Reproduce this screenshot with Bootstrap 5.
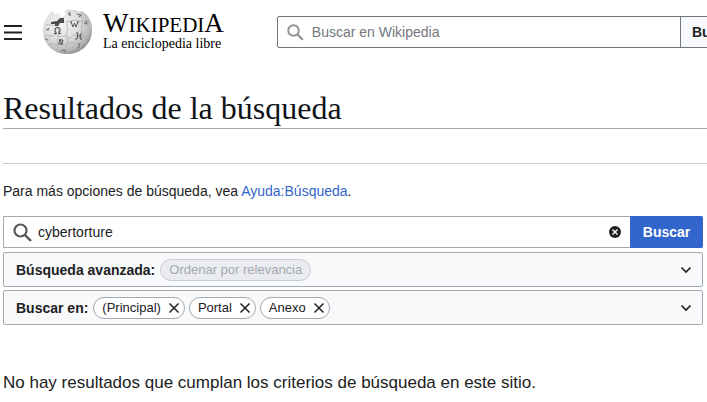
<!DOCTYPE html>
<html lang="es">
<head>
<meta charset="utf-8">
<meta name="viewport" content="width=device-width, initial-scale=1">
<title>Resultados de la búsqueda - Wikipedia, la enciclopedia libre</title>
<link href="https://cdn.jsdelivr.net/npm/bootstrap@5.3.0/dist/css/bootstrap.min.css" rel="stylesheet">
<style>
body { font-family: "Liberation Sans", Arial, sans-serif; font-size: 14px; line-height: 22px; color: #202122; overflow-x: hidden; }
a { color: #36c; }
svg { display: block; flex: none; }
.site-header { height: 64px; overflow: hidden; padding-left: 3px; }
.menu-btn { padding: 0 1px; margin-right: 19px; }
.brand { color: #000; font-family: "Liberation Serif", "Times New Roman", serif; margin-right: 53px; gap: 11px; }
.wordmark { font-size: 21px; line-height: 22px; }
.wordmark span { font-size: 27px; }
.tagline { font-size: 14px; line-height: 16px; }
.box { border: 1px solid #a2a9b1; border-radius: 2px; }
.top-search { height: 32px; border: 1px solid #72777d; border-radius: 2px; margin-right: -48px; }
.field { border: 0; outline: 0; background: none; color: #202122; padding: 0; min-width: 0; }
.top-search .field { padding-left: 8px; }
.top-search .field::placeholder { color: #72777d; opacity: 1; }
.top-search svg { margin-left: 9px; }
.top-search button { background: #f8f9fa; border: 0; border-left: 1px solid #72777d; color: #202122; padding: 0 11px; width: 74px; text-align: left; flex: none; }
main { padding: 0 4px 0 3px; }
h1 { font-family: "Liberation Serif", Georgia, serif; font-size: 32px; line-height: 40px; font-weight: 400; color: #101418; border-bottom: 1px solid #a2a9b1; margin: 24px -4px 0 0; }
.divider { border-top: 1px solid #c8ccd1; margin: 34px -4px 16px 0; }
.query { height: 32px; border-right: 0; margin-top: 14px; }
.query .field { padding-left: 6px; }
.query > svg { margin-left: 9px; }
.clear-btn { padding: 0; margin-right: 9px; }
.submit-btn { align-self: stretch; margin: -1px 0; background: #36c; color: #fff; border: 0; border-radius: 0 2px 2px 0; width: 73px; }
.panel { min-height: 35px; background: #f8f9fa; padding: 0 10px 0 12px; gap: 5px; }
.panels { margin-top: 4px; gap: 3px; }
.pill { height: 22px; border: 1px solid #a2a9b1; border-radius: 11px; background: #fff; font-size: 13px; line-height: 20px; padding: 0 4px 0 8px; gap: 7px; }
.pill.muted { background: #eaecf0; border-color: #c8ccd1; color: #a2a9b1; padding-right: 8px; }
.plain { border: 0; background: none; padding: 0; color: #202122; }
.empty { font-size: 17px; line-height: 24px; margin: 46px 0 0; }
</style>
</head>
<body>
<header class="site-header d-flex align-items-center">
  <button class="menu-btn border-0 bg-transparent" type="button" aria-label="Menú principal">
    <svg width="18" height="16" viewBox="0 0 18 16"><path d="M0 2h18M0 8.500h18M0 15h18" stroke="#202122" stroke-width="2"/></svg>
  </button>
  <a class="brand d-flex align-items-center text-decoration-none" href="#">
    <svg width="50" height="46" viewBox="0 0 50 46" aria-hidden="true">
      <defs>
        <radialGradient id="globe" cx=".38" cy=".32" r=".72"><stop offset="0" stop-color="#f5f5f5"/><stop offset=".5" stop-color="#dedede"/><stop offset=".82" stop-color="#b8b8b8"/><stop offset="1" stop-color="#808080"/></radialGradient>
        <clipPath id="ball"><path d="M12 1c-1 3 0 5 2 4 2-3 5 0 3 3l5-1 2-2-2-3 4-2 5 1 4 0 1 2 4-1 4 3C48 9 50 15 50 21 50 35 39 45 25 45S1 35 1 21C1 12 6 5 12 1Z"/></clipPath>
      </defs>
      <g clip-path="url(#ball)">
        <path d="M0 0h50v46H0z" fill="url(#globe)"/>
        <path d="M4 16c4-1 5 1 9 0M16 15c-1 5 2 8 0 13s1 8 0 15M2 27c4-2 6 1 9 0s2-4 5-1 6 0 8 1 2 4 5 1 5-2 8 0 4-3 12-1M5 36c4-2 7 0 11-1s5 2 9 0 6-2 9 0 6-1 11 0M25 12c-1 5 2 6 0 11s2 7 0 12 1 6 0 10M40 4c-2 5 2 7 0 12s2 9 0 14-1 6-2 11M25 12c5 1 7-2 12 0s7-1 12 1" fill="none" stroke="#b0b0b0" stroke-width=".8"/>
        <path d="M9 13l6-1 3-3 4 0 0 3-4 2-2 3h-3v-2l-4 0Z" fill="#4c4c4c"/>
        <path d="M17 10h5v4h-5z" fill="#4c4c4c"/>
        <path d="M26 4l3 2M28 3l-1 4M35 5l4 1-2 2M44 11l1 4-3-1M4 20l2 1 1-2M3 30l3 1M36 35c3-1 1 3 0 4M19 42l3-1 2 2" fill="none" stroke="#777" stroke-width="1.100"/>
        <path d="M12 24.500h2v-1c-2-2-1-5 1.500-5s3.500 3 1.500 5v1h2" fill="none" stroke="#444" stroke-width="1.100"/>
        <path d="M28 13h2M29 13l2 5 1.500-4 1.500 4 2-5M35 13h2M34 24h2l-1 6h-2M39 24l-1 6h2M35 28l3-2M17 31l4 0-1 4-3 0 1-5 2 6" fill="none" stroke="#555" stroke-width="1"/>
      </g>
    </svg>
    <div class="text-nowrap">
      <div class="wordmark"><span>W</span>IKIPEDI<span>A</span></div>
      <div class="tagline">La enciclopedia libre</div>
    </div>
  </a>
  <form class="top-search d-flex align-items-center flex-grow-1" role="search">
    <svg width="17" height="17" viewBox="0 0 17 17"><circle cx="6.500" cy="6.500" r="5.300" fill="none" stroke="#909396" stroke-width="1.900"/><path d="m10.500 10.500 5.300 5.300" stroke="#909396" stroke-width="2.200"/></svg>
    <input class="field flex-grow-1" type="search" placeholder="Buscar en Wikipedia" aria-label="Buscar en Wikipedia">
    <button class="fw-bold align-self-stretch" type="submit">Buscar</button>
  </form>
</header>
<main>
  <h1>Resultados de la búsqueda</h1>
  <div class="divider"></div>
  <p class="mb-0">Para más opciones de búsqueda, vea <a class="text-decoration-none" href="#">Ayuda:Búsqueda</a>.</p>
  <form>
    <div class="query box d-flex align-items-center">
      <svg width="19" height="19" viewBox="0 0 19 19"><circle cx="7.500" cy="7.500" r="6" fill="none" stroke="#54595d" stroke-width="2.200"/><path d="m12 12 6 6" stroke="#54595d" stroke-width="2.400"/></svg>
      <input class="field flex-grow-1" type="text" value="cybertorture" aria-label="Buscar">
      <button class="clear-btn border-0 bg-transparent" type="button" aria-label="Borrar"><svg width="12" height="12" viewBox="0 0 12 12"><circle cx="6" cy="6" r="6" fill="#202122"/><path d="m3.500 3.500 5 5m0-5-5 5" stroke="#fff" stroke-width="1.400"/></svg></button>
      <button class="submit-btn fw-bold" type="submit">Buscar</button>
    </div>
    <div class="panels d-flex flex-column">
      <div class="panel box d-flex align-items-center">
        <span class="fw-bold">Búsqueda avanzada:</span>
        <span class="pill muted">Ordenar por relevancia</span>
        <button class="plain ms-auto" type="button" aria-label="Mostrar búsqueda avanzada"><svg width="12" height="12" viewBox="0 0 12 12"><path d="m1.500 3.500 4.500 4.500 4.500-4.500" fill="none" stroke="#202122" stroke-width="1.700"/></svg></button>
      </div>
      <div class="panel box d-flex align-items-center">
        <span class="fw-bold">Buscar en:</span>
        <div class="d-flex gap-1">
          <span class="pill d-flex align-items-center">(Principal)<button class="plain" type="button" aria-label="Quitar (Principal)"><svg width="12" height="12" viewBox="0 0 12 12"><path d="m1.500 1.500 9 9m0-9-9 9" stroke="#202122" stroke-width="1.500"/></svg></button></span>
          <span class="pill d-flex align-items-center">Portal<button class="plain" type="button" aria-label="Quitar Portal"><svg width="12" height="12" viewBox="0 0 12 12"><path d="m1.500 1.500 9 9m0-9-9 9" stroke="#202122" stroke-width="1.500"/></svg></button></span>
          <span class="pill d-flex align-items-center">Anexo<button class="plain" type="button" aria-label="Quitar Anexo"><svg width="12" height="12" viewBox="0 0 12 12"><path d="m1.500 1.500 9 9m0-9-9 9" stroke="#202122" stroke-width="1.500"/></svg></button></span>
        </div>
        <button class="plain ms-auto" type="button" aria-label="Mostrar espacios de nombres"><svg width="12" height="12" viewBox="0 0 12 12"><path d="m1.500 3.500 4.500 4.500 4.500-4.500" fill="none" stroke="#202122" stroke-width="1.700"/></svg></button>
      </div>
    </div>
  </form>
  <p class="empty">No hay resultados que cumplan los criterios de búsqueda en este sitio.</p>
</main>
<script src="https://cdn.jsdelivr.net/npm/bootstrap@5.3.0/dist/js/bootstrap.bundle.min.js"></script>
</body>
</html>
